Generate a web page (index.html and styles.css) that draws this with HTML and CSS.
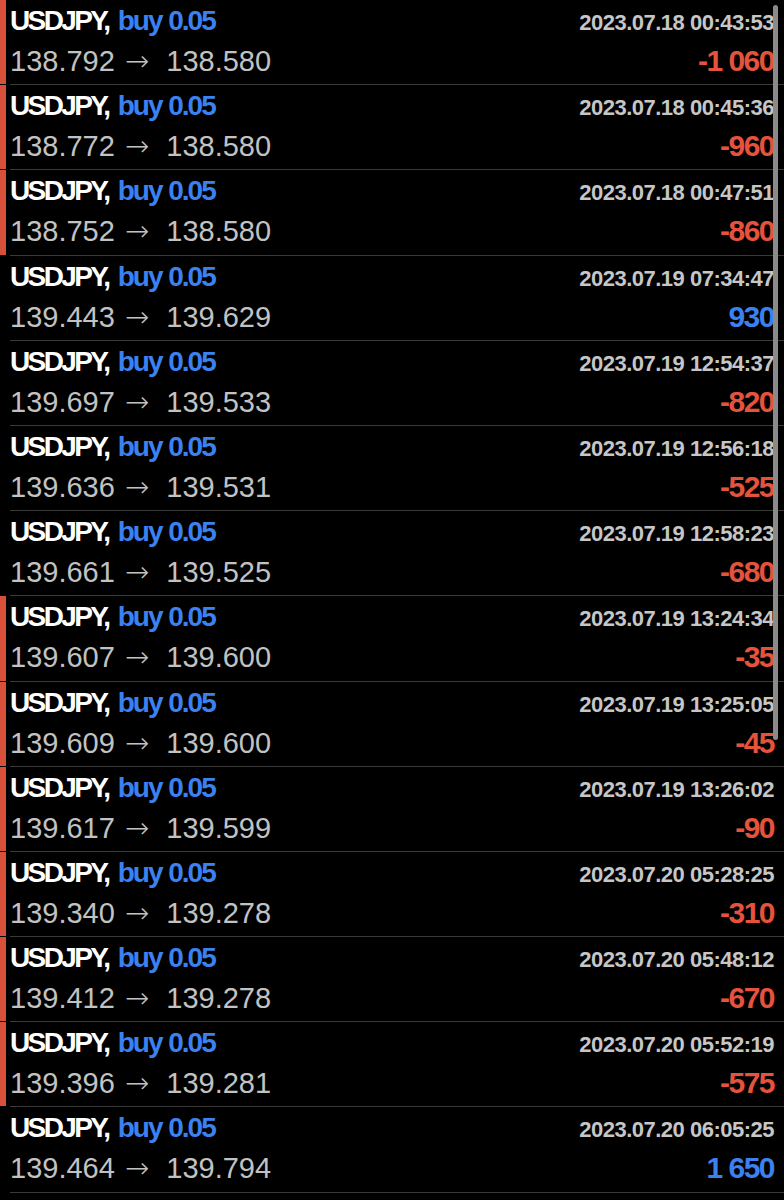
FILE: index.html
```html
<!DOCTYPE html>
<html lang="en">
<head>
    <meta charset="UTF-8">
    <meta content="width=device-width, initial-scale=1.0" name="viewport">
    <title>History</title>
    <link rel="stylesheet" href="styles.css">
</head>
<body>
<div class="history">
    <div class="trade marked">
        <div class="mark"></div>
        <div class="info">
            <div class="line">
                <span class="symbol">USDJPY, <span class="side">buy 0.05</span></span>
                <span class="time">2023.07.18 00:43:53</span>
            </div>
            <div class="line">
                <span class="prices">138.792 <span class="arrow">→</span> 138.580</span>
                <span class="profit loss">-1 060</span>
            </div>
        </div>
    </div>
    <div class="trade marked">
        <div class="mark"></div>
        <div class="info">
            <div class="line">
                <span class="symbol">USDJPY, <span class="side">buy 0.05</span></span>
                <span class="time">2023.07.18 00:45:36</span>
            </div>
            <div class="line">
                <span class="prices">138.772 <span class="arrow">→</span> 138.580</span>
                <span class="profit loss">-960</span>
            </div>
        </div>
    </div>
    <div class="trade marked">
        <div class="mark"></div>
        <div class="info">
            <div class="line">
                <span class="symbol">USDJPY, <span class="side">buy 0.05</span></span>
                <span class="time">2023.07.18 00:47:51</span>
            </div>
            <div class="line">
                <span class="prices">138.752 <span class="arrow">→</span> 138.580</span>
                <span class="profit loss">-860</span>
            </div>
        </div>
    </div>
    <div class="trade">
        <div class="mark"></div>
        <div class="info">
            <div class="line">
                <span class="symbol">USDJPY, <span class="side">buy 0.05</span></span>
                <span class="time">2023.07.19 07:34:47</span>
            </div>
            <div class="line">
                <span class="prices">139.443 <span class="arrow">→</span> 139.629</span>
                <span class="profit gain">930</span>
            </div>
        </div>
    </div>
    <div class="trade">
        <div class="mark"></div>
        <div class="info">
            <div class="line">
                <span class="symbol">USDJPY, <span class="side">buy 0.05</span></span>
                <span class="time">2023.07.19 12:54:37</span>
            </div>
            <div class="line">
                <span class="prices">139.697 <span class="arrow">→</span> 139.533</span>
                <span class="profit loss">-820</span>
            </div>
        </div>
    </div>
    <div class="trade">
        <div class="mark"></div>
        <div class="info">
            <div class="line">
                <span class="symbol">USDJPY, <span class="side">buy 0.05</span></span>
                <span class="time">2023.07.19 12:56:18</span>
            </div>
            <div class="line">
                <span class="prices">139.636 <span class="arrow">→</span> 139.531</span>
                <span class="profit loss">-525</span>
            </div>
        </div>
    </div>
    <div class="trade">
        <div class="mark"></div>
        <div class="info">
            <div class="line">
                <span class="symbol">USDJPY, <span class="side">buy 0.05</span></span>
                <span class="time">2023.07.19 12:58:23</span>
            </div>
            <div class="line">
                <span class="prices">139.661 <span class="arrow">→</span> 139.525</span>
                <span class="profit loss">-680</span>
            </div>
        </div>
    </div>
    <div class="trade marked">
        <div class="mark"></div>
        <div class="info">
            <div class="line">
                <span class="symbol">USDJPY, <span class="side">buy 0.05</span></span>
                <span class="time">2023.07.19 13:24:34</span>
            </div>
            <div class="line">
                <span class="prices">139.607 <span class="arrow">→</span> 139.600</span>
                <span class="profit loss">-35</span>
            </div>
        </div>
    </div>
    <div class="trade marked">
        <div class="mark"></div>
        <div class="info">
            <div class="line">
                <span class="symbol">USDJPY, <span class="side">buy 0.05</span></span>
                <span class="time">2023.07.19 13:25:05</span>
            </div>
            <div class="line">
                <span class="prices">139.609 <span class="arrow">→</span> 139.600</span>
                <span class="profit loss">-45</span>
            </div>
        </div>
    </div>
    <div class="trade marked">
        <div class="mark"></div>
        <div class="info">
            <div class="line">
                <span class="symbol">USDJPY, <span class="side">buy 0.05</span></span>
                <span class="time">2023.07.19 13:26:02</span>
            </div>
            <div class="line">
                <span class="prices">139.617 <span class="arrow">→</span> 139.599</span>
                <span class="profit loss">-90</span>
            </div>
        </div>
    </div>
    <div class="trade marked">
        <div class="mark"></div>
        <div class="info">
            <div class="line">
                <span class="symbol">USDJPY, <span class="side">buy 0.05</span></span>
                <span class="time">2023.07.20 05:28:25</span>
            </div>
            <div class="line">
                <span class="prices">139.340 <span class="arrow">→</span> 139.278</span>
                <span class="profit loss">-310</span>
            </div>
        </div>
    </div>
    <div class="trade marked">
        <div class="mark"></div>
        <div class="info">
            <div class="line">
                <span class="symbol">USDJPY, <span class="side">buy 0.05</span></span>
                <span class="time">2023.07.20 05:48:12</span>
            </div>
            <div class="line">
                <span class="prices">139.412 <span class="arrow">→</span> 139.278</span>
                <span class="profit loss">-670</span>
            </div>
        </div>
    </div>
    <div class="trade marked">
        <div class="mark"></div>
        <div class="info">
            <div class="line">
                <span class="symbol">USDJPY, <span class="side">buy 0.05</span></span>
                <span class="time">2023.07.20 05:52:19</span>
            </div>
            <div class="line">
                <span class="prices">139.396 <span class="arrow">→</span> 139.281</span>
                <span class="profit loss">-575</span>
            </div>
        </div>
    </div>
    <div class="trade">
        <div class="mark"></div>
        <div class="info">
            <div class="line">
                <span class="symbol">USDJPY, <span class="side">buy 0.05</span></span>
                <span class="time">2023.07.20 06:05:25</span>
            </div>
            <div class="line">
                <span class="prices">139.464 <span class="arrow">→</span> 139.794</span>
                <span class="profit gain">1 650</span>
            </div>
        </div>
    </div>
    <div class="scrollbar"></div>
</div>
</body>
</html>
```

FILE: styles.css
```css
body {
    margin: 0;
    background-color: #000;
    font-family: "Liberation Sans", Arial, sans-serif;
    color: #c8c8c8;
}
.history {
    position: relative;
}
.trade {
    display: flex;
    height: 85.2px;
}
.mark {
    width: 6px;
    margin-bottom: 1px;
}
.trade.marked .mark {
    background-color: #d9503a;
}
.info {
    flex: 1;
    margin-left: 4px;
    padding-right: 10px;
    border-bottom: 1px solid #3a3a3a;
    display: flex;
    flex-direction: column;
}
.line {
    display: flex;
    justify-content: space-between;
    align-items: baseline;
    height: 40px;
    line-height: 40px;
}
.line:first-child {
    margin-top: 1px;
}
/* no condensed face installed, so tighten the bold text by hand */
.symbol {
    font-weight: bold;
    font-size: 28px;
    letter-spacing: -2.6px;
    word-spacing: 4px;
    color: #fff;
}
.side {
    letter-spacing: -2px;
    word-spacing: 1px;
    color: #3b82f0;
}
.time {
    font-weight: bold;
    font-size: 22px;
    letter-spacing: -0.5px;
    color: #c6c6c6;
}
.prices {
    font-size: 29px;
    color: #c2c2c2;
}
.arrow {
    font-family: "DejaVu Sans", sans-serif;
    font-weight: 200;
    font-size: 29px;
    margin: 0 9px 0 2px;
}
.profit {
    font-weight: bold;
    font-size: 30px;
    letter-spacing: -1.5px;
}
.profit.loss {
    color: #e5533d;
}
.profit.gain {
    color: #3b82f0;
}
.scrollbar {
    position: absolute;
    top: 5px;
    left: 773px;
    width: 5px;
    height: 735px;
    border-radius: 3px;
    background-color: #8a8a8a;
}
```
